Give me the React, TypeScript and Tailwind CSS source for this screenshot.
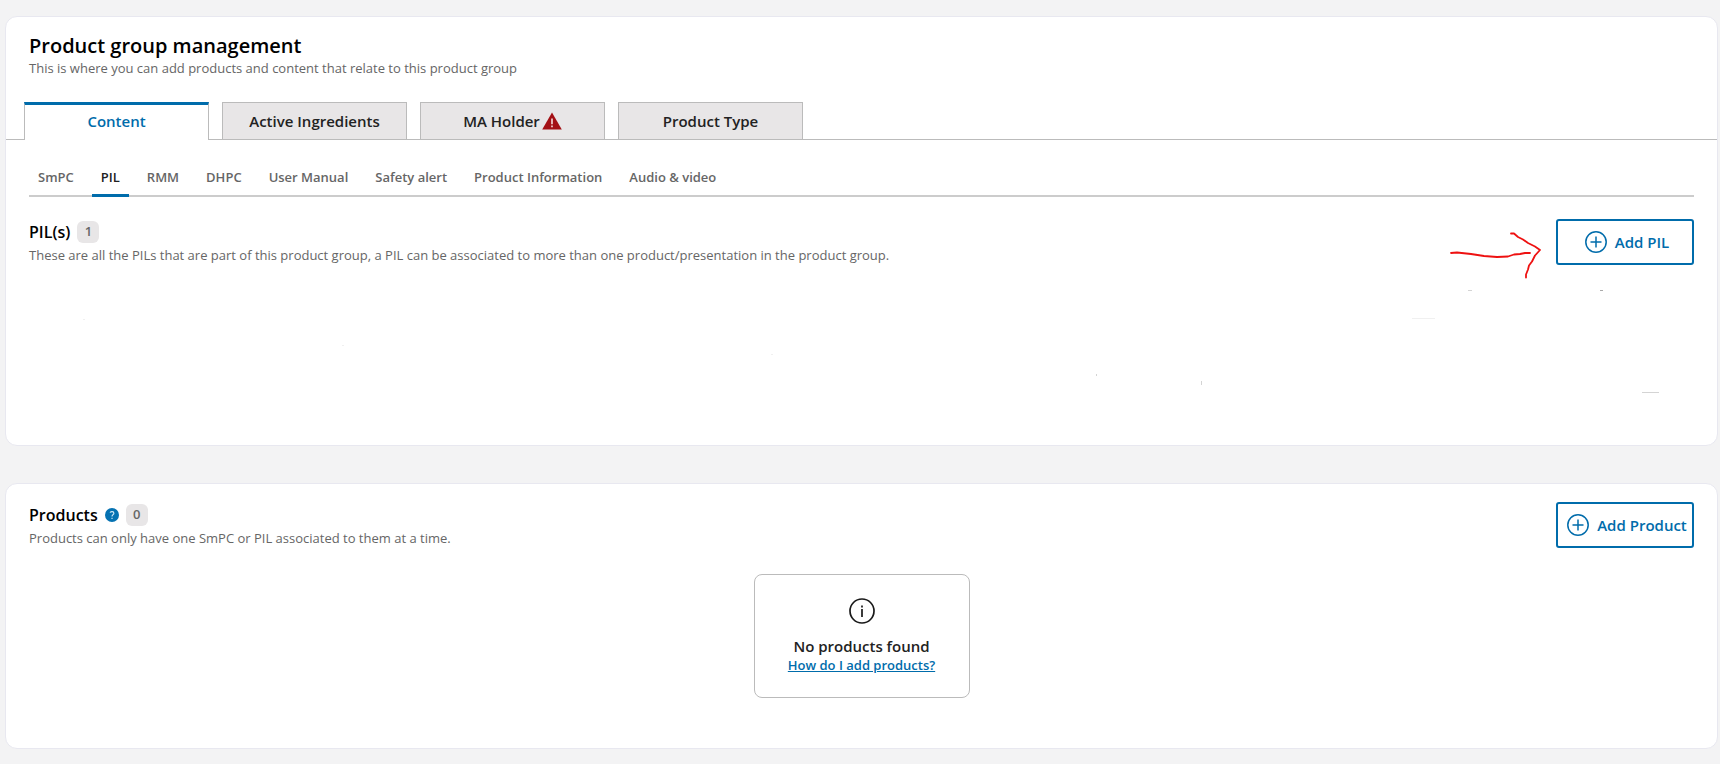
import type { ReactNode } from "react";

const tabs = ["Content", "Active Ingredients", "MA Holder", "Product Type"];

const subTabs = [
  "SmPC",
  "PIL",
  "RMM",
  "DHPC",
  "User Manual",
  "Safety alert",
  "Product Information",
  "Audio & video",
];

function WarningIcon() {
  return (
    <svg width="20" height="18" viewBox="0 0 20 18" aria-hidden="true">
      <path d="M10 0.5 L19.8 17.5 H0.2 Z" fill="#a31015" />
      <path d="M10 6.5 V12.2 M10 13.6 V15.2" stroke="#f4dcdc" strokeWidth="1.6" />
    </svg>
  );
}

function PlusIcon() {
  return (
    <svg width="22" height="22" viewBox="0 0 22 22" fill="none" stroke="#006cab" aria-hidden="true">
      <circle cx="11" cy="11" r="10.2" strokeWidth="1.5" />
      <path d="M11 5.5 V16.5 M5.5 11 H16.5" strokeWidth="1.5" />
    </svg>
  );
}

function HelpIcon() {
  return (
    <svg width="14" height="14" viewBox="0 0 14 14" fill="none" aria-hidden="true">
      <circle cx="7" cy="7" r="7" fill="#0572b2" />
      <path
        d="M5.1 4.7 C5.4 3.3 8.9 3.1 8.9 5.2 C8.9 6.6 7 6.8 7 8.4 M7 9.7 V11"
        stroke="#d6ecf8"
        strokeWidth="1.1"
      />
    </svg>
  );
}

function InfoIcon() {
  return (
    <svg width="26" height="26" viewBox="0 0 26 26" fill="none" stroke="#1a1a1a" aria-hidden="true">
      <circle cx="13" cy="13" r="12" strokeWidth="1.7" />
      <path d="M13 7.5 V9.5 M13 11 V19" strokeWidth="1.7" />
    </svg>
  );
}

// hand-drawn arrow next to the button, plus the leftover marks in the empty list
function Marks() {
  return (
    <svg
      className="pointer-events-none absolute top-0 right-0"
      width="1665"
      height="180"
      viewBox="0 -1 1665 180"
      fill="none"
      aria-hidden="true"
    >
      <path
        d="M1422 33 L1428 32.5 L1442 34 L1455 36 L1468 37 L1479 36.5 L1485 34.5 L1491 34 L1496 33 L1501 33 M1482 13.5 L1485 13.5 L1489 17 L1494 19.5 L1499 23 L1506 26.5 L1511 30 L1506 35.5 L1503 41.5 L1500 45.5 L1499 49.5 L1497 54.5 L1497 57.5"
        stroke="#ee1111"
        strokeWidth="1.8"
        strokeLinecap="round"
        strokeLinejoin="round"
      />
      <g stroke="#d4d4d4">
        <path d="M1439 70.5 h4 M1613 172.5 h17" />
        <path d="M1571 70.5 h3" stroke="#aaaaaa" />
        <path d="M1067.5 154 v2 M1172.5 161 v4" />
        <path d="M1383 98.5 h23 M742 134.5 h2 M313 125.5 h2 M54 99.5 h2" stroke="#f0f0f0" />
      </g>
    </svg>
  );
}

function Card({ children }: { children: ReactNode }) {
  return <section className="rounded-xl border border-[#e8e8f0] bg-white">{children}</section>;
}

function Count({ value }: { value: number }) {
  return (
    <span className="flex h-[22px] w-[22px] items-center justify-center rounded-md bg-[#e8e6e7] text-[13px] font-semibold text-[#666]">
      {value}
    </span>
  );
}

function AddButton({ label }: { label: string }) {
  return (
    <button className="flex h-[46px] w-[138px] shrink-0 items-center justify-center gap-2 whitespace-nowrap rounded-[3px] border-2 border-[#006cab] bg-white pl-1 text-[15px] font-semibold text-[#006cab]">
      <PlusIcon />
      {label}
    </button>
  );
}

export default function App() {
  return (
    <div className="min-h-screen bg-[#f3f3f4] pt-4 pr-0.5 pb-[15px] pl-[5px] font-['Open_Sans',sans-serif]">
      <main className="flex flex-col gap-[37px]">
        <Card>
          <div className="px-[23px] pt-4">
            <h1 className="text-xl leading-[26px] font-semibold text-black">Product group management</h1>
            <p className="text-[13px] leading-[18px] text-[#666]">
              This is where you can add products and content that relate to this product group
            </p>
          </div>

          <div className="mt-[25px] flex h-[38px] gap-[13px] border-b border-[#bbb] pl-[18px]">
            {tabs.map((tab, i) => (
              <button
                key={tab}
                className={
                  i === 0
                    ? "-mb-px flex w-[185px] items-center justify-center border-x border-t-3 border-x-[#bbb] border-t-[#006cab] bg-white pb-0.5 text-[15px] font-semibold text-[#006cab]"
                    : "flex w-[185px] items-center justify-center gap-0.5 border-x border-t border-[#bbb] bg-[#e8e6e7] text-[15px] font-semibold text-[#222]"
                }
              >
                {tab}
                {tab === "MA Holder" && <WarningIcon />}
              </button>
            ))}
          </div>

          <div className="px-[23px] pb-[180px]">
            <nav className="mt-5 flex h-[37px] gap-[9px] border-b-2 border-[#ccc]">
              {subTabs.map((tab) => (
                <button
                  key={tab}
                  className={
                    tab === "PIL"
                      ? "-mb-0.5 border-b-3 border-[#006cab] px-[9px] pt-0.5 text-[13px] font-semibold text-[#222]"
                      : "-mb-0.5 border-b-3 border-transparent px-[9px] pt-0.5 text-[13px] font-semibold text-[#666]"
                  }
                >
                  {tab}
                </button>
              ))}
            </nav>

            <div className="relative mt-[22px] flex justify-between">
              <div>
                <div className="flex h-[26px] items-center gap-[7px]">
                  <h2 className="text-base font-semibold text-black">PIL(s)</h2>
                  <Count value={1} />
                </div>
                <p className="mt-px text-[13px] leading-[18px] text-[#666]">
                  These are all the PILs that are part of this product group, a PIL can be associated to more than one
                  product/presentation in the product group.
                </p>
              </div>
              <AddButton label="Add PIL" />
              <Marks />
            </div>
          </div>
        </Card>

        <Card>
          <div className="px-[23px] pt-[18px] pb-[50px]">
            <div className="flex justify-between">
              <div>
                <div className="flex h-[26px] items-center gap-[7px]">
                  <h2 className="text-base font-semibold text-black">Products</h2>
                  <button aria-label="About products">
                    <HelpIcon />
                  </button>
                  <Count value={0} />
                </div>
                <p className="mt-px text-[13px] leading-[18px] text-[#666]">
                  Products can only have one SmPC or PIL associated to them at a time.
                </p>
              </div>
              <AddButton label="Add Product" />
            </div>

            <div className="mx-auto mt-[26px] flex h-[124px] w-[216px] flex-col items-center rounded-lg border border-[#bbb] pt-[23px]">
              <InfoIcon />
              <p className="mt-3 text-[15px] leading-5 font-semibold text-[#222]">No products found</p>
              <a href="#" className="text-[13px] leading-[18px] font-semibold text-[#006cab] underline">
                How do I add products?
              </a>
            </div>
          </div>
        </Card>
      </main>
    </div>
  );
}
